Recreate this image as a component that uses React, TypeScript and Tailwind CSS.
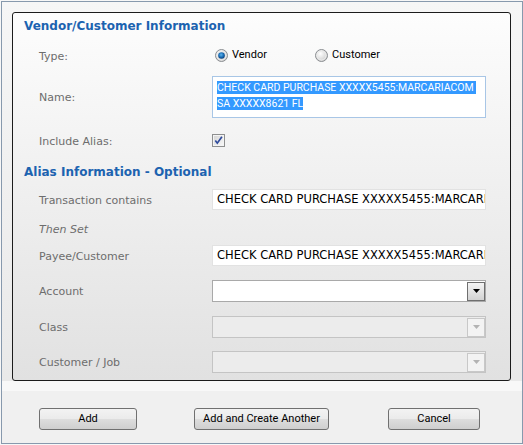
import React from "react";

const label = "font-['DejaVu_Sans',sans-serif] text-[11px] text-[#6d6d6d]";
const ctl = "font-['Roboto',sans-serif]";

function Radio({ checked }: { checked?: boolean }) {
  return (
    <svg width="13" height="13" viewBox="0 0 13 13">
      <defs>
        <radialGradient id={checked ? "rgOn" : "rgOff"} cx="0.4" cy="0.35" r="0.7">
          <stop offset="0" stopColor="#ffffff" />
          <stop offset="1" stopColor="#c9c9c9" />
        </radialGradient>
        <radialGradient id="dot" cx="0.45" cy="0.4" r="0.6">
          <stop offset="0" stopColor="#5fb6ee" />
          <stop offset="0.6" stopColor="#1a6db5" />
          <stop offset="1" stopColor="#0b3f7a" />
        </radialGradient>
      </defs>
      <circle cx="6.5" cy="6.5" r="6" fill={`url(#${checked ? "rgOn" : "rgOff"})`} stroke="#8b8e92" strokeWidth="1" />
      <circle cx="6.5" cy="6.5" r="4.5" fill="none" stroke="#ececec" strokeWidth="1" />
      {checked && <circle cx="6.5" cy="6.5" r="3.3" fill="url(#dot)" />}
    </svg>
  );
}

function Check() {
  return (
    <svg width="13" height="13" viewBox="0 0 13 13">
      <defs>
        <linearGradient id="cbg" x1="0" y1="0" x2="1" y2="1">
          <stop offset="0" stopColor="#d6d6d6" />
          <stop offset="1" stopColor="#f7f7f7" />
        </linearGradient>
      </defs>
      <rect x="0.5" y="0.5" width="12" height="12" fill="#f4f4f4" stroke="#8e8f8f" />
      <rect x="2" y="2" width="9" height="9" fill="url(#cbg)" />
      <path d="M3.3 6.6 L5.3 9.2 L9.9 2.8" fill="none" stroke="#2e4a9c" strokeWidth="1.7" />
    </svg>
  );
}

function Arrow({ color }: { color: string }) {
  return (
    <svg width="7" height="4" viewBox="0 0 7 4">
      <path d="M0 0 H7 L3.5 4 Z" fill={color} />
    </svg>
  );
}

function Select({ disabled }: { disabled?: boolean }) {
  return (
    <div
      className={
        disabled
          ? "w-[274px] h-[22px] border border-[#c4c4c4] bg-[#ececec] flex items-center justify-end"
          : "w-[274px] h-[22px] border border-[#a9a9a9] bg-white flex items-center justify-end"
      }
    >
      <div
        className={
          disabled
            ? "w-[18px] h-[19px] border border-[#c8c8c8] bg-[#f3f3f3] flex items-center justify-center"
            : "w-[18px] h-[19px] border border-[#6f6f6f] bg-gradient-to-b from-[#f4f4f4] to-[#d2d2d2] flex items-center justify-center"
        }
      >
        <Arrow color={disabled ? "#b3b3b3" : "#000000"} />
      </div>
    </div>
  );
}

function TextInput() {
  return (
    <div className="w-[274px] h-[21px] border border-[#e2e2e2] bg-white pl-[4px] pt-[1px] overflow-hidden whitespace-nowrap flex items-center font-['DejaVu_Sans',sans-serif] text-[11.5px] text-black">
      CHECK CARD PURCHASE XXXXX5455:MARCARIACOM SA XXXXX8621 FL
    </div>
  );
}

function Row({ h, mt, text, italic, children }: { h: string; mt: string; text: string; italic?: boolean; children?: React.ReactNode }) {
  return (
    <div className={`flex items-center ${h} ${mt}`}>
      <div className={`w-[199px] pl-[26px] pt-[3px] ${label} ${italic ? "italic" : ""}`}>{text}</div>
      {children}
    </div>
  );
}

function Btn({ w, children }: { w: string; children: React.ReactNode }) {
  return (
    <div
      className={`${w} h-[22px] rounded-[3px] border border-[#707070] bg-[linear-gradient(to_bottom,#f3f3f3_0%,#ebebeb_48%,#dddddd_52%,#cfcfcf_100%)] flex items-center justify-center ${ctl} text-[11px] text-black`}
    >
      {children}
    </div>
  );
}

export default function App() {
  return (
    <div className="w-[523px] h-[445px] bg-[#f7f7f7] pl-[1px] pt-[1px]">
      <div className="w-[522px] h-[443px] border border-[#8799ad] bg-[#f0f0f0] flex flex-col">
        <div className="h-[379px] pl-[10px] pt-[10px] bg-gradient-to-b from-[#f6f6f6] to-[#e9e9e9]">
          <div className="w-[499px] h-[369px] border border-[#1c1c1c] rounded-[3px] bg-gradient-to-b from-[#fdfdfd] to-[#e1e1e1] flex flex-col">
            <div className="h-[24px] pl-[11px] pt-[1px] leading-[24px] font-['DejaVu_Sans',sans-serif] text-[12px] font-bold text-[#1c63b0]">
              Vendor/Customer Information
            </div>
            <Row h="h-[25px]" mt="mt-[6px]" text="Type:">
              <div className="flex items-center w-[100px] pl-[3px]">
                <Radio checked />
                <span className={`ml-[4px] ${ctl} text-[11px] text-black`}>Vendor</span>
              </div>
              <div className="flex items-center pl-[3px]">
                <Radio />
                <span className={`ml-[4px] ${ctl} text-[11px] text-black`}>Customer</span>
              </div>
            </Row>
            <Row h="h-[42px]" mt="mt-[8px]" text="Name:">
              <div className={`w-[274px] h-[42px] border border-[#a8c6e6] bg-white pl-[4px] pt-[3px] ${ctl} text-[10.5px]`}>
                <div>
                  <span className="inline-block h-[13px] leading-[13px] bg-[#3399ff] text-white whitespace-pre">CHECK CARD PURCHASE XXXXX5455:MARCARIACOM </span>
                </div>
                <div>
                  <span className="inline-block h-[13px] leading-[13px] bg-[#3399ff] text-white whitespace-pre">SA XXXXX8621 FL</span>
                </div>
              </div>
            </Row>
            <Row h="h-[25px]" mt="mt-[10px]" text="Include Alias:">
              <Check />
            </Row>
            <div className="h-[24px] mt-[6px] pl-[11px] pt-[1px] leading-[24px] font-['DejaVu_Sans',sans-serif] text-[12px] font-bold text-[#1c63b0]">
              Alias Information - Optional
            </div>
            <Row h="h-[21px]" mt="mt-[6px]" text="Transaction contains">
              <TextInput />
            </Row>
            <Row h="h-[21px]" mt="mt-[8px]" text="Then Set" italic />
            <Row h="h-[21px]" mt="mt-[6px]" text="Payee/Customer">
              <TextInput />
            </Row>
            <Row h="h-[22px]" mt="mt-[14px]" text="Account">
              <Select />
            </Row>
            <Row h="h-[22px]" mt="mt-[14px]" text="Class">
              <Select disabled />
            </Row>
            <Row h="h-[22px]" mt="mt-[13px]" text="Customer / Job">
              <Select disabled />
            </Row>
          </div>
        </div>
        <div className="h-[10px] bg-[#f8f8f8]" />
        <div className="flex pt-[17px] pl-[37px]">
          <Btn w="w-[98px]">Add</Btn>
          <div className="ml-[57px]">
            <Btn w="w-[135px]">Add and Create Another</Btn>
          </div>
          <div className="ml-[59px]">
            <Btn w="w-[92px]">Cancel</Btn>
          </div>
        </div>
      </div>
    </div>
  );
}
